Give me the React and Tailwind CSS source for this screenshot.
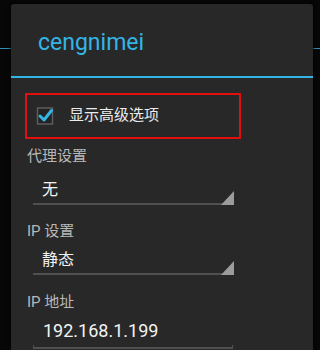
export default function App() {
  const font = { fontFamily: "Roboto, 'Noto Sans CJK SC', sans-serif" };
  return (
    <div className="relative w-[320px] h-[350px] bg-[#070707] overflow-hidden" style={font}>
      <div className="absolute left-0 right-0 top-[48px] h-[1px] bg-[#2f8fb5]" />
      <div className="relative ml-[11px] mt-[4px] w-[302px] h-[346px] bg-[#282828] rounded-t-[3px] shadow-[0_0_4px_rgba(0,0,0,0.8)]">
        <div className="h-[72px] flex items-center pl-[27px] pt-[5px]">
          <span className="text-[23px] leading-[28px] text-[#33b5e5]">cengnimei</span>
        </div>
        <div className="h-[2px] bg-[#33b5e5]" />
        <div className="pt-[15px] pl-[14px]">
          <div className="w-[216px] h-[46px] border-[2px] border-[#e01010] flex items-center pl-[9px] pb-[3px]">
            <svg width="20" height="22" viewBox="0 0 20 22">
              <rect x="1.5" y="4" width="15" height="16" fill="#232323" stroke="#5c5c5c" strokeWidth="1.5" />
              <path d="M4 12 L8 16 L15.5 6.5" fill="none" stroke="#33b5e5" strokeWidth="3" strokeLinecap="round" strokeLinejoin="round" />
            </svg>
            <span className="ml-[13px] text-[15px] leading-[20px] text-[#ececec]">显示高级选项</span>
          </div>
        </div>
        <div className="pl-[16px] pt-[7px] pb-[7px] text-[15px] leading-[20px] text-[#b8b8b8]">代理设置</div>
        <div className="ml-[22px] w-[200px] relative border-b-2 border-[#505050] pt-[5px] pb-[1px] pl-[9px]">
          <span className="text-[16px] leading-[20px] text-[#f2f2f2]">无</span>
          <svg className="absolute right-[-1px] bottom-[-2px]" width="13" height="14" viewBox="0 0 13 14">
            <path d="M13 0 L13 14 L0 14 Z" fill="#9c9c9c" />
          </svg>
        </div>
        <div className="pl-[16px] pt-[16px] pb-[5px] text-[15px] leading-[20px] text-[#b8b8b8]">IP 设置</div>
        <div className="ml-[22px] w-[200px] relative border-b-2 border-[#505050] pt-[2px] pb-[1px] pl-[9px]">
          <span className="text-[16px] leading-[20px] text-[#f2f2f2]">静态</span>
          <svg className="absolute right-[-1px] bottom-[-2px]" width="13" height="14" viewBox="0 0 13 14">
            <path d="M13 0 L13 14 L0 14 Z" fill="#9c9c9c" />
          </svg>
        </div>
        <div className="pl-[16px] pt-[17px] text-[15px] leading-[20px] text-[#b8b8b8]">IP 地址</div>
        <div className="ml-[22px] w-[200px] pt-[7px] pl-[10px]">
          <span className="text-[18px] leading-[24px] text-[#f2f2f2]">192.168.1.199</span>
        </div>
        <div className="ml-[22px] w-[200px] h-[4px] mt-[1px] border-x border-b-2 border-[#505050]" />
      </div>
    </div>
  );
}
